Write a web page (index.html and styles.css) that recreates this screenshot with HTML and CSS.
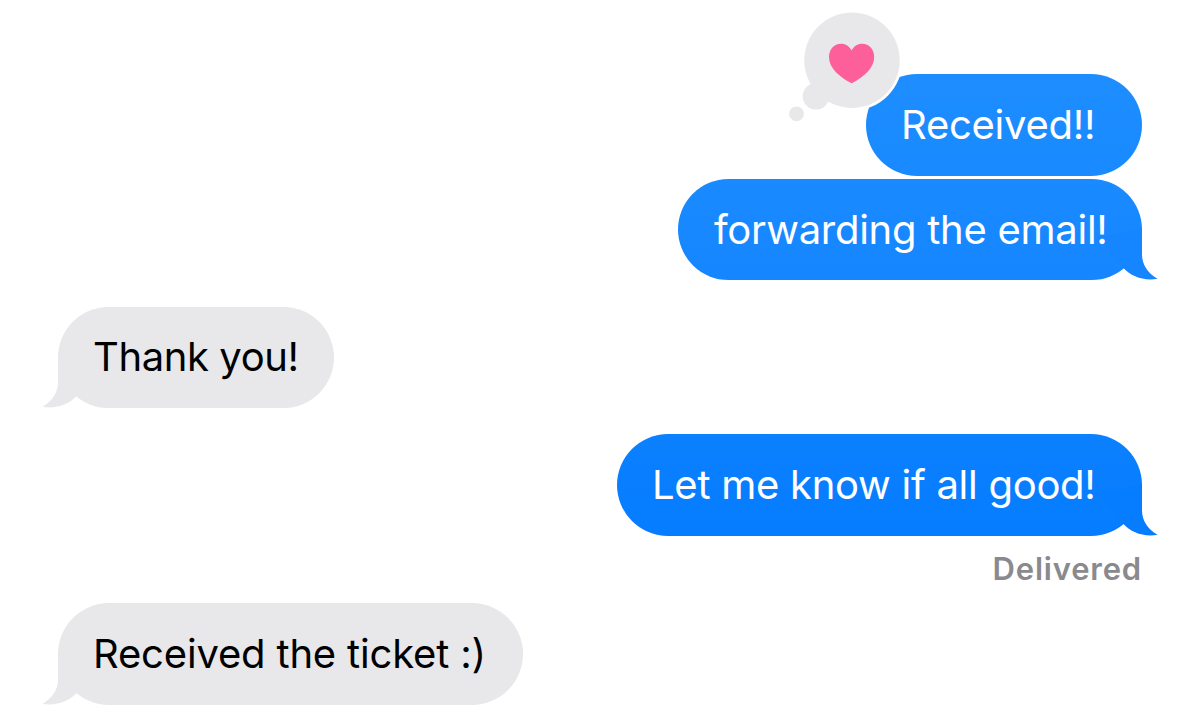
FILE: index.html
```html
<!DOCTYPE html>
<html lang="en">
<head>
  <meta charset="UTF-8">
  <meta name="viewport" content="width=device-width, initial-scale=1.0">
  <title>Messages</title>
  <link rel="stylesheet" href="styles.css">
</head>
<body>

  <div class="chat">
    <div class="bubble sent first">
      <span class="text">Received!!</span>
      <svg class="tapback" viewBox="0 0 118 116">
        <circle cx="66" cy="50.3" r="50.4" fill="#fff"/>
        <circle cx="66" cy="50.3" r="47.7"/>
        <circle cx="30" cy="86.3" r="13.3"/>
        <circle cx="10.5" cy="103.8" r="7.4"/>
        <path class="heart" d="M65.6 40.6C63.4 36.2 59.8 33.8 55 33.8C48 33.8 43 39.4 43 47C43 58.5 54 67.3 65.6 73.3C77.2 67.3 88.2 58.5 88.2 47C88.2 39.4 83.2 33.8 76.2 33.8C71.4 33.8 67.8 36.2 65.6 40.6Z"/>
      </svg>
    </div>

    <div class="bubble sent second">
      <span class="text">forwarding the email!</span>
      <svg class="tail" viewBox="0 0 60 52"><path d="M44 0V27C44.3 36.5 49.5 45 59.5 50.8C46 53.2 33 48.5 25.5 40L0 10Z"/></svg>
    </div>

    <div class="bubble received thanks">
      <span class="text">Thank you!</span>
      <svg class="tail" viewBox="0 0 60 52"><path d="M44 0V27C44.3 36.5 49.5 45 59.5 50.8C46 53.2 33 48.5 25.5 40L0 10Z"/></svg>
    </div>

    <div class="bubble sent latest">
      <span class="text">Let me know if all good!</span>
      <svg class="tail" viewBox="0 0 60 52"><path d="M44 0V27C44.3 36.5 49.5 45 59.5 50.8C46 53.2 33 48.5 25.5 40L0 10Z"/></svg>
    </div>
    <div class="status">Delivered</div>

    <div class="bubble received ticket">
      <span class="text">Received the ticket :)</span>
      <svg class="tail" viewBox="0 0 60 52"><path d="M44 0V27C44.3 36.5 49.5 45 59.5 50.8C46 53.2 33 48.5 25.5 40L0 10Z"/></svg>
    </div>
  </div>

</body>
</html>
```
FILE: styles.css
```css
body {
  margin: 0;
  background-color: #fff;
  font-family: Inter, "Liberation Sans", sans-serif;
}

.chat {
  display: flex;
  flex-direction: column;
  box-sizing: border-box;
  height: 725px;
  padding: 74px 58px 0;
  overflow: hidden;
}

.bubble {
  position: relative;
  display: flex;
  align-items: center;
  box-sizing: border-box;
  flex-shrink: 0;
  height: 101.5px;
  padding-left: 35px;
  border-radius: 51px;
  font-size: 40px;
  letter-spacing: -0.27px;
  white-space: nowrap;
}

/* keeps the words above the tail */
.text {
  position: relative;
  z-index: 1;
}

.sent {
  align-self: flex-end;
  color: #fff;
}

.received {
  align-self: flex-start;
  background-color: #e8e8ea;
  color: #000;
}

.first {
  width: 276px;
  background: linear-gradient(#1d8dff, #198aff);
}

.second {
  width: 464px;
  height: 101px;
  margin-top: 3.5px;
  padding-left: 36px;
  background: linear-gradient(#198aff, #1586ff);
}

.thanks {
  width: 276px;
  height: 101px;
  margin-top: 26.5px;
  padding-bottom: 2px;
  letter-spacing: -0.4px;
}

.latest {
  width: 525px;
  margin-top: 26.5px;
  background: linear-gradient(#0b81ff, #067cff);
}

.ticket {
  width: 464.5px;
  margin-top: 16px;
  letter-spacing: -0.18px;
}

.tail {
  position: absolute;
  right: -16px;
  bottom: 0;
  width: 60px;
  height: 52px;
}

.received .tail {
  right: auto;
  left: -16px;
  transform: scaleX(-1);
  fill: #e8e8ea;
}

.second .tail {
  fill: #1586ff;
}

.latest .tail {
  fill: #067cff;
}

.tapback {
  position: absolute;
  left: -80px;
  top: -64px;
  width: 118px;
  height: 116px;
  fill: #e8e8ea;
}

.heart {
  fill: #fc5f9a;
}

.status {
  align-self: flex-end;
  height: 36px;
  margin-top: 15.5px;
  line-height: 36px;
  font-size: 31px;
  font-weight: 600;
  letter-spacing: 0.8px;
  color: #8a8a8e;
}
```
